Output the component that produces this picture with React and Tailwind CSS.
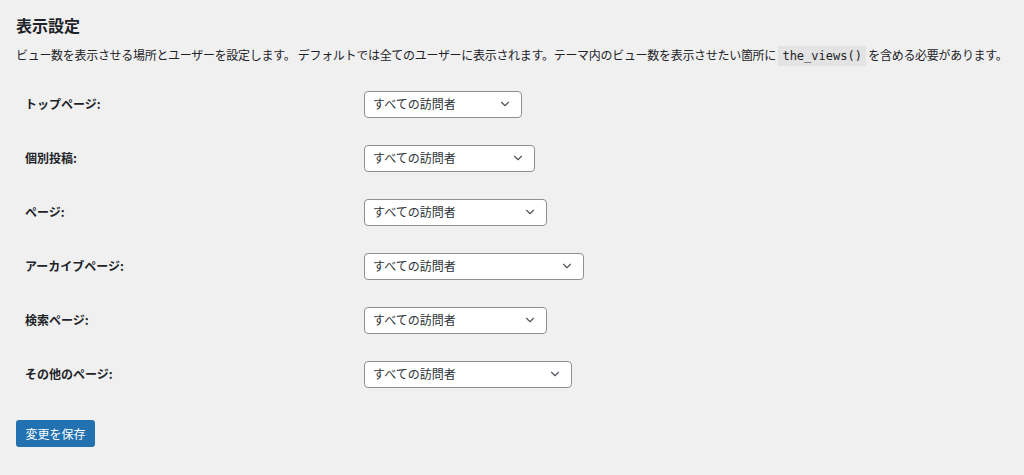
import { ChevronDown } from 'lucide-react';

const rows = [
    { label: 'トップページ:', width: 'w-[158px]' },
    { label: '個別投稿:', width: 'w-[171px]' },
    { label: 'ページ:', width: 'w-[183px]' },
    { label: 'アーカイブページ:', width: 'w-[220px]' },
    { label: '検索ページ:', width: 'w-[183px]' },
    { label: 'その他のページ:', width: 'w-[208px]' },
];

const font = "font-['Noto_Sans_CJK_JP','Noto_Sans',sans-serif]";

function FakeSelect({ width }) {
    return (
        <div className={`${width} h-[27px] flex items-center justify-between pl-[8px] pr-[9px] bg-white border border-[#8c8f94] rounded-[4px] text-[12px] text-[#2c3338]`}>
            <span>すべての訪問者</span>
            <ChevronDown size={14} strokeWidth={2} className="text-[#50575e]" />
        </div>
    );
}

export default function App() {
    return (
        <div className={`min-h-[475px] bg-[#f0f0f1] px-4 text-[#1d2327] ${font}`}>
            <h2 className="pt-[14px] text-[16px] leading-[22px] font-bold">表示設定</h2>
            <p className="mt-[9px] text-[12px] leading-[20px] whitespace-nowrap tracking-[-0.3px]">
                ビュー数を表示させる場所とユーザーを設定します。 デフォルトでは全てのユーザーに表示されます。テーマ内のビュー数を表示させたい箇所に{' '}
                <code className="inline-block px-[4px] bg-[#e3e3e3] font-['DejaVu_Sans_Mono',monospace] text-[12px] leading-[20px] tracking-normal">the_views()</code>{' '}
                を含める必要があります。
            </p>
            <div className="mt-[11px]">
                {rows.map((r) => (
                    <div key={r.label} className="h-[54px] flex items-center">
                        <div className="w-[348px] pl-[9px] text-[12px] font-bold">{r.label}</div>
                        <FakeSelect width={r.width} />
                    </div>
                ))}
            </div>
            <button className="mt-[19px] w-[79px] h-[27px] bg-[#2271b1] rounded-[3px] text-white text-[12px]">
                変更を保存
            </button>
        </div>
    );
}
